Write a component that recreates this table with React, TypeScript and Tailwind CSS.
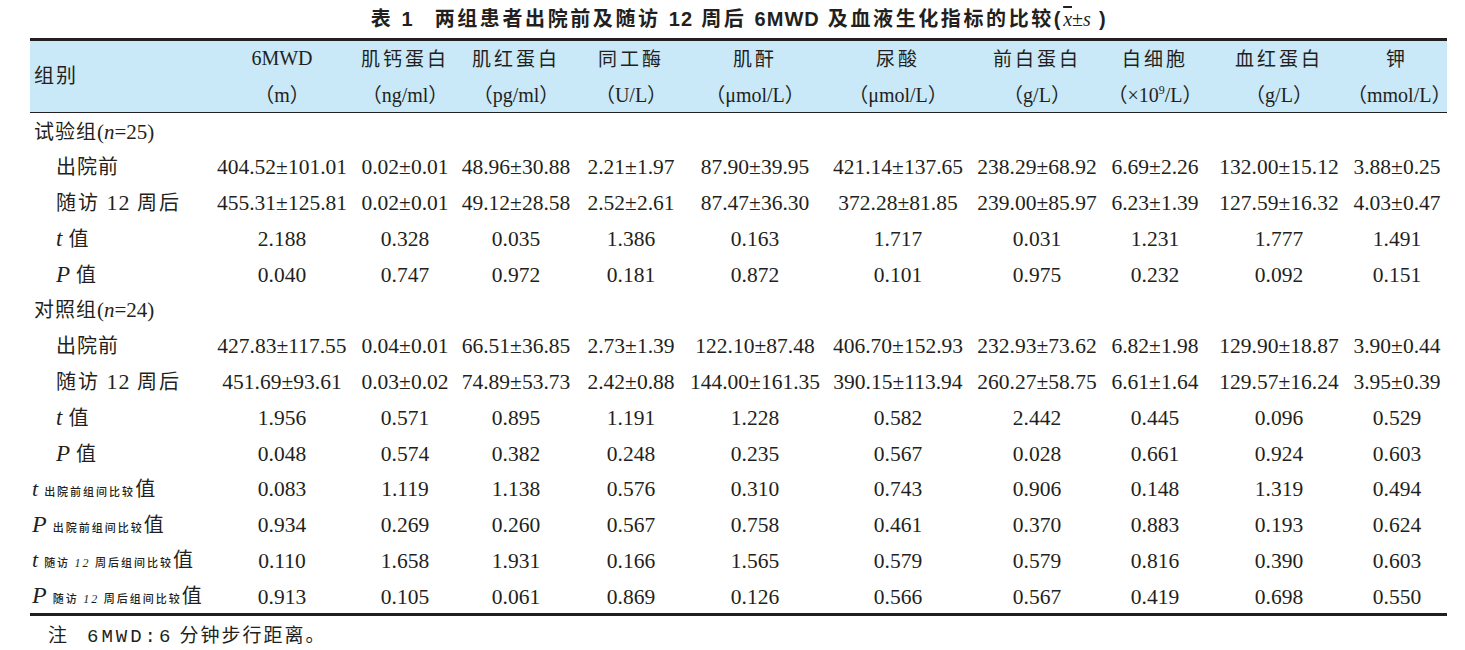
const SERIF = 'font-["Liberation_Serif","Noto_Sans_CJK_SC",serif]';
const CJK = 'font-["Noto_Sans_CJK_SC","Liberation_Serif",sans-serif]';

const colWidths = ['w-[183px]', 'w-[138px]', 'w-[108px]', 'w-[114px]', 'w-[116px]', 'w-[132px]', 'w-[154px]', 'w-[124px]', 'w-[112px]', 'w-[136px]', 'w-[100px]'];

const heads: { name: string; unit: React.ReactNode }[] = [
  { name: '6MWD', unit: 'm' },
  { name: '肌钙蛋白', unit: 'ng/ml' },
  { name: '肌红蛋白', unit: 'pg/ml' },
  { name: '同工酶', unit: 'U/L' },
  { name: '肌酐', unit: 'μmol/L' },
  { name: '尿酸', unit: 'μmol/L' },
  { name: '前白蛋白', unit: 'g/L' },
  { name: '白细胞', unit: <>×10<sup className="text-[12px] -top-[8px]">9</sup>/L</> },
  { name: '血红蛋白', unit: 'g/L' },
  { name: '钾', unit: 'mmol/L' }
];

type Row =
  | { kind: 'group'; label: string; n: number }
  | { kind: 'sub'; label: string; values: string[] };

const rows: Row[] = [
  { kind: 'group', label: '试验组', n: 25 },
  { kind: 'sub', label: '出院前', values: ['404.52±101.01', '0.02±0.01', '48.96±30.88', '2.21±1.97', '87.90±39.95', '421.14±137.65', '238.29±68.92', '6.69±2.26', '132.00±15.12', '3.88±0.25'] },
  { kind: 'sub', label: '随访 12 周后', values: ['455.31±125.81', '0.02±0.01', '49.12±28.58', '2.52±2.61', '87.47±36.30', '372.28±81.85', '239.00±85.97', '6.23±1.39', '127.59±16.32', '4.03±0.47'] },
  { kind: 'sub', label: 't', values: ['2.188', '0.328', '0.035', '1.386', '0.163', '1.717', '0.031', '1.231', '1.777', '1.491'] },
  { kind: 'sub', label: 'P', values: ['0.040', '0.747', '0.972', '0.181', '0.872', '0.101', '0.975', '0.232', '0.092', '0.151'] },
  { kind: 'group', label: '对照组', n: 24 },
  { kind: 'sub', label: '出院前', values: ['427.83±117.55', '0.04±0.01', '66.51±36.85', '2.73±1.39', '122.10±87.48', '406.70±152.93', '232.93±73.62', '6.82±1.98', '129.90±18.87', '3.90±0.44'] },
  { kind: 'sub', label: '随访 12 周后', values: ['451.69±93.61', '0.03±0.02', '74.89±53.73', '2.42±0.88', '144.00±161.35', '390.15±113.94', '260.27±58.75', '6.61±1.64', '129.57±16.24', '3.95±0.39'] },
  { kind: 'sub', label: 't', values: ['1.956', '0.571', '0.895', '1.191', '1.228', '0.582', '2.442', '0.445', '0.096', '0.529'] },
  { kind: 'sub', label: 'P', values: ['0.048', '0.574', '0.382', '0.248', '0.235', '0.567', '0.028', '0.661', '0.924', '0.603'] }
];

const between: { sym: string; pre: boolean; values: string[] }[] = [
  { sym: 't', pre: true, values: ['0.083', '1.119', '1.138', '0.576', '0.310', '0.743', '0.906', '0.148', '1.319', '0.494'] },
  { sym: 'P', pre: true, values: ['0.934', '0.269', '0.260', '0.567', '0.758', '0.461', '0.370', '0.883', '0.193', '0.624'] },
  { sym: 't', pre: false, values: ['0.110', '1.658', '1.931', '0.166', '1.565', '0.579', '0.579', '0.816', '0.390', '0.603'] },
  { sym: 'P', pre: false, values: ['0.913', '0.105', '0.061', '0.869', '0.126', '0.566', '0.567', '0.419', '0.698', '0.550'] }
];

const cell = `${SERIF} text-[21.5px] leading-[28px] pt-[3px] p-0 text-center whitespace-nowrap`;
const labelCell = 'text-left whitespace-nowrap pt-[3px] leading-[24px]';

function SubLabel({ label }: { label: string }) {
  if (label === 't' || label === 'P') {
    return (
      <span className="pl-[26px]">
        <i className={`${SERIF} text-[23px]`}>{label}</i>
        <span className={`${CJK} text-[20px] ml-[6px]`}>值</span>
      </span>
    );
  }
  if (label === '随访 12 周后') {
    return (
      <span className={`pl-[26px] ${CJK} text-[20px] tracking-[2px]`}>
        随访 <span className={`${SERIF} text-[22px] tracking-[1px]`}>12</span> 周后
      </span>
    );
  }
  return <span className={`pl-[26px] ${CJK} text-[20px] tracking-[1px]`}>{label}</span>;
}

function BetweenLabel({ sym, pre }: { sym: string; pre: boolean }) {
  return (
    <span className="pl-[2px] whitespace-nowrap">
      <i className={`${SERIF} ${sym === 'P' ? 'text-[24px]' : 'text-[22px]'}`}>{sym}</i>
      <span className={`${CJK} text-[11px] tracking-[2px] font-medium ml-[6px]`}>
        {pre ? '出院前组间比较' : (
          <>随访 <i className={`${SERIF} text-[12px]`}>12</i> 周后组间比较</>
        )}
      </span>
      <span className={`${CJK} text-[20px]`}>值</span>
    </span>
  );
}

export default function App() {
  return (
    <div className="w-[1465px] h-[650px] bg-white text-[#231f20] overflow-hidden">
      <div className={`h-[38px] flex items-center justify-center pl-[14px] ${'font-["Liberation_Sans","Noto_Sans_CJK_SC",sans-serif]'} font-bold text-[20px] tracking-[2.6px]`}>
        <span>表 <span className="tracking-normal">1</span></span>
        <span className="ml-[22px]">
          两组患者出院前及随访 <span className="tracking-[1px]">12</span> 周后 <span className="tracking-[1px]">6MWD</span> 及血液生化指标的比较(
          <i className={`${SERIF} font-normal tracking-normal overline`}>x</i>
          <span className={`${SERIF} font-normal tracking-normal`}>±</span>
          <i className={`${SERIF} font-normal tracking-normal`}>s</i> )
        </span>
      </div>
      <div className="ml-[30px] w-[1417px] border-t-[3px] border-b-[3px] border-[#231f20]">
        <table className="table-fixed w-full border-collapse">
          <colgroup>
            {colWidths.map((w, i) => (
              <col key={i} className={w} />
            ))}
          </colgroup>
          <thead className="bg-[#c9e8f8]">
            <tr className="h-[36px]">
              <th rowSpan={2} className={`${CJK} text-[20px] font-normal tracking-[2px] text-left pl-[4px] pb-[2px] border-b border-[#231f20]`}>组别</th>
              {heads.map((h, i) => (
                <th key={i} className={`${i === 0 ? `${SERIF} text-[20px] tracking-normal` : `${CJK} text-[19px] tracking-[3px]`} font-normal leading-[28px] text-center whitespace-nowrap pb-[2px]`}>
                  {h.name}
                </th>
              ))}
            </tr>
            <tr className="h-[35px] border-b border-[#231f20]">
              {heads.map((h, i) => (
                <th key={i} className={`${SERIF} font-normal text-[20px] leading-[28px] text-center whitespace-nowrap pt-[2px]`}>
                  （{h.unit}）
                </th>
              ))}
            </tr>
          </thead>
          <tbody>
            {rows.map((r, i) =>
              r.kind === 'group' ? (
                <tr key={i} className="h-[35.8px]">
                  <td colSpan={11} className="pl-[4px] pt-[3px] leading-[24px] whitespace-nowrap">
                    <span className={`${CJK} text-[20px] tracking-[1px]`}>{r.label}</span>
                    <span className={`${SERIF} text-[21px]`}>(<i>n</i>={r.n})</span>
                  </td>
                </tr>
              ) : (
                <tr key={i} className="h-[35.8px]">
                  <td className={labelCell}>
                    <SubLabel label={r.label} />
                  </td>
                  {r.values.map((v, j) => (
                    <td key={j} className={cell}>{v}</td>
                  ))}
                </tr>
              )
            )}
            {between.map((b, i) => (
              <tr key={`b${i}`} className="h-[35.8px]">
                <td className={labelCell}>
                  <BetweenLabel sym={b.sym} pre={b.pre} />
                </td>
                {b.values.map((v, j) => (
                  <td key={j} className={cell}>{v}</td>
                ))}
              </tr>
            ))}
          </tbody>
        </table>
      </div>
      <div className={`pl-[48px] pt-[4px] text-[19px] ${CJK} whitespace-nowrap`}>
        注<span className={`ml-[20px] ${'font-["Liberation_Mono",monospace]'} tracking-[3px]`}>6MWD:6</span><span className="ml-[6px] tracking-[2px]">分钟步行距离。</span>
      </div>
    </div>
  );
}
